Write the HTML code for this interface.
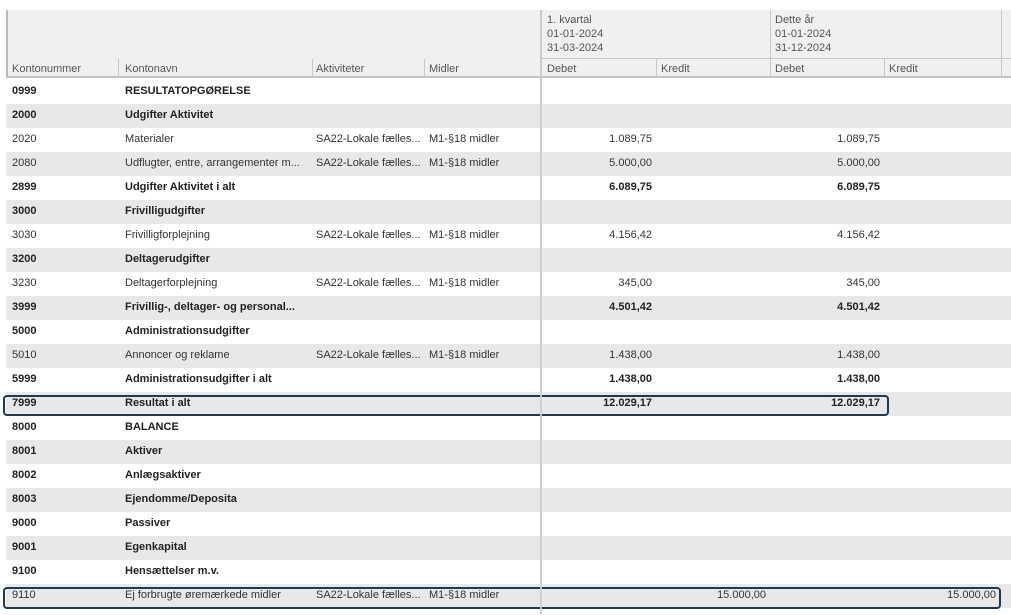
<!DOCTYPE html>
<html><head><meta charset="utf-8"><style>
*{margin:0;padding:0;box-sizing:border-box}
body{width:1011px;height:615px;background:#fff;position:relative;overflow:hidden;font-family:"Liberation Sans",sans-serif;font-size:11px;color:#333}
.a{position:absolute;white-space:nowrap}
.hd{position:absolute;left:6px;top:10px;width:1005px;height:68px;background:#f0f0f0;border-left:2px solid #bbb;border-bottom:2px solid #c4c4c4}
.vl{position:absolute;width:1px;background:#c8c8c8}
.row{position:absolute;left:6px;width:1005px;height:24px}
.g{background:#e8e8e8}
.b{font-weight:bold;color:#222}
.n{position:absolute;text-align:right}
</style></head><body>
<div class="hd"></div>
<div class="a" style="left:540px;top:10px;width:2px;height:600px;background:#ccc"></div>
<div class="vl" style="left:770px;top:10px;height:68px"></div>
<div class="vl" style="left:1001px;top:10px;height:68px"></div>
<div class="a" style="left:540px;top:58px;width:471px;height:1px;background:#c8c8c8"></div>
<div class="vl" style="left:118px;top:59px;height:19px"></div>
<div class="vl" style="left:312px;top:59px;height:19px"></div>
<div class="vl" style="left:424px;top:59px;height:19px"></div>
<div class="vl" style="left:656px;top:59px;height:19px"></div>
<div class="vl" style="left:884px;top:59px;height:19px"></div>
<div class="a" style="left:547px;top:13px;line-height:14px;color:#555">1. kvartal<br>01-01-2024<br>31-03-2024</div>
<div class="a" style="left:775px;top:13px;line-height:14px;color:#555">Dette år<br>01-01-2024<br>31-12-2024</div>
<div class="a" style="left:12px;top:63px;color:#555">Kontonummer</div>
<div class="a" style="left:125px;top:63px;color:#555">Kontonavn</div>
<div class="a" style="left:316px;top:63px;color:#555">Aktiviteter</div>
<div class="a" style="left:429px;top:63px;color:#555">Midler</div>
<div class="a" style="left:547px;top:63px;color:#555">Debet</div>
<div class="a" style="left:661px;top:63px;color:#555">Kredit</div>
<div class="a" style="left:775px;top:63px;color:#555">Debet</div>
<div class="a" style="left:889px;top:63px;color:#555">Kredit</div>
<div id="rows"></div>
<script>
var R=[
["0999","RESULTATOPGØRELSE",1],
["2000","Udgifter Aktivitet",1],
["2020","Materialer",0,"1.089,75","","1.089,75",""],
["2080","Udflugter, entre, arrangementer m...",0,"5.000,00","","5.000,00",""],
["2899","Udgifter Aktivitet i alt",1,"6.089,75","","6.089,75",""],
["3000","Frivilligudgifter",1],
["3030","Frivilligforplejning",0,"4.156,42","","4.156,42",""],
["3200","Deltagerudgifter",1],
["3230","Deltagerforplejning",0,"345,00","","345,00",""],
["3999","Frivillig-, deltager- og personal...",1,"4.501,42","","4.501,42",""],
["5000","Administrationsudgifter",1],
["5010","Annoncer og reklame",0,"1.438,00","","1.438,00",""],
["5999","Administrationsudgifter i alt",1,"1.438,00","","1.438,00",""],
["7999","Resultat i alt",1,"12.029,17","","12.029,17",""],
["8000","BALANCE",1],["8001","Aktiver",1],["8002","Anlægsaktiver",1],["8003","Ejendomme/Deposita",1],
["9000","Passiver",1],["9001","Egenkapital",1],["9100","Hensættelser m.v.",1],
["9110","Ej forbrugte øremærkede midler",0,"","15.000,00","","15.000,00"]];
var h="";
R.forEach(function(r,i){var t=80+24*i;var c=r[2]?" b":"";
h+='<div class="row'+(i%2?" g":"")+'" style="top:'+t+'px"></div>';
var y=t+5;
h+='<div class="a'+c+'" style="left:12px;top:'+y+'px">'+r[0]+'</div>';
h+='<div class="a'+c+'" style="left:125px;top:'+y+'px">'+r[1]+'</div>';
if(!r[2]&&r[3]!==undefined){h+='<div class="a" style="left:316px;top:'+y+'px">SA22-Lokale fælles...</div><div class="a" style="left:429px;top:'+y+'px">M1-§18 midler</div>';}
var xs=[652,766,880,996];
for(var k=0;k<4;k++){var v=r[3+k];if(v)h+='<div class="n'+c+'" style="left:'+(xs[k]-110)+'px;width:110px;top:'+y+'px">'+v+'</div>';}
});
h+='<div class="a" style="left:3px;top:395px;width:886px;height:21px;border:2px solid #1e3a52;border-radius:4px"></div>';
h+='<div class="a" style="left:3px;top:587px;width:998px;height:22px;border:2px solid #1e3a52;border-radius:4px"></div>';
document.getElementById("rows").innerHTML=h;
</script>
<div class="a" style="left:540px;top:80px;width:2px;height:535px;background:#ccc;opacity:.9;pointer-events:none"></div>
</body></html>
